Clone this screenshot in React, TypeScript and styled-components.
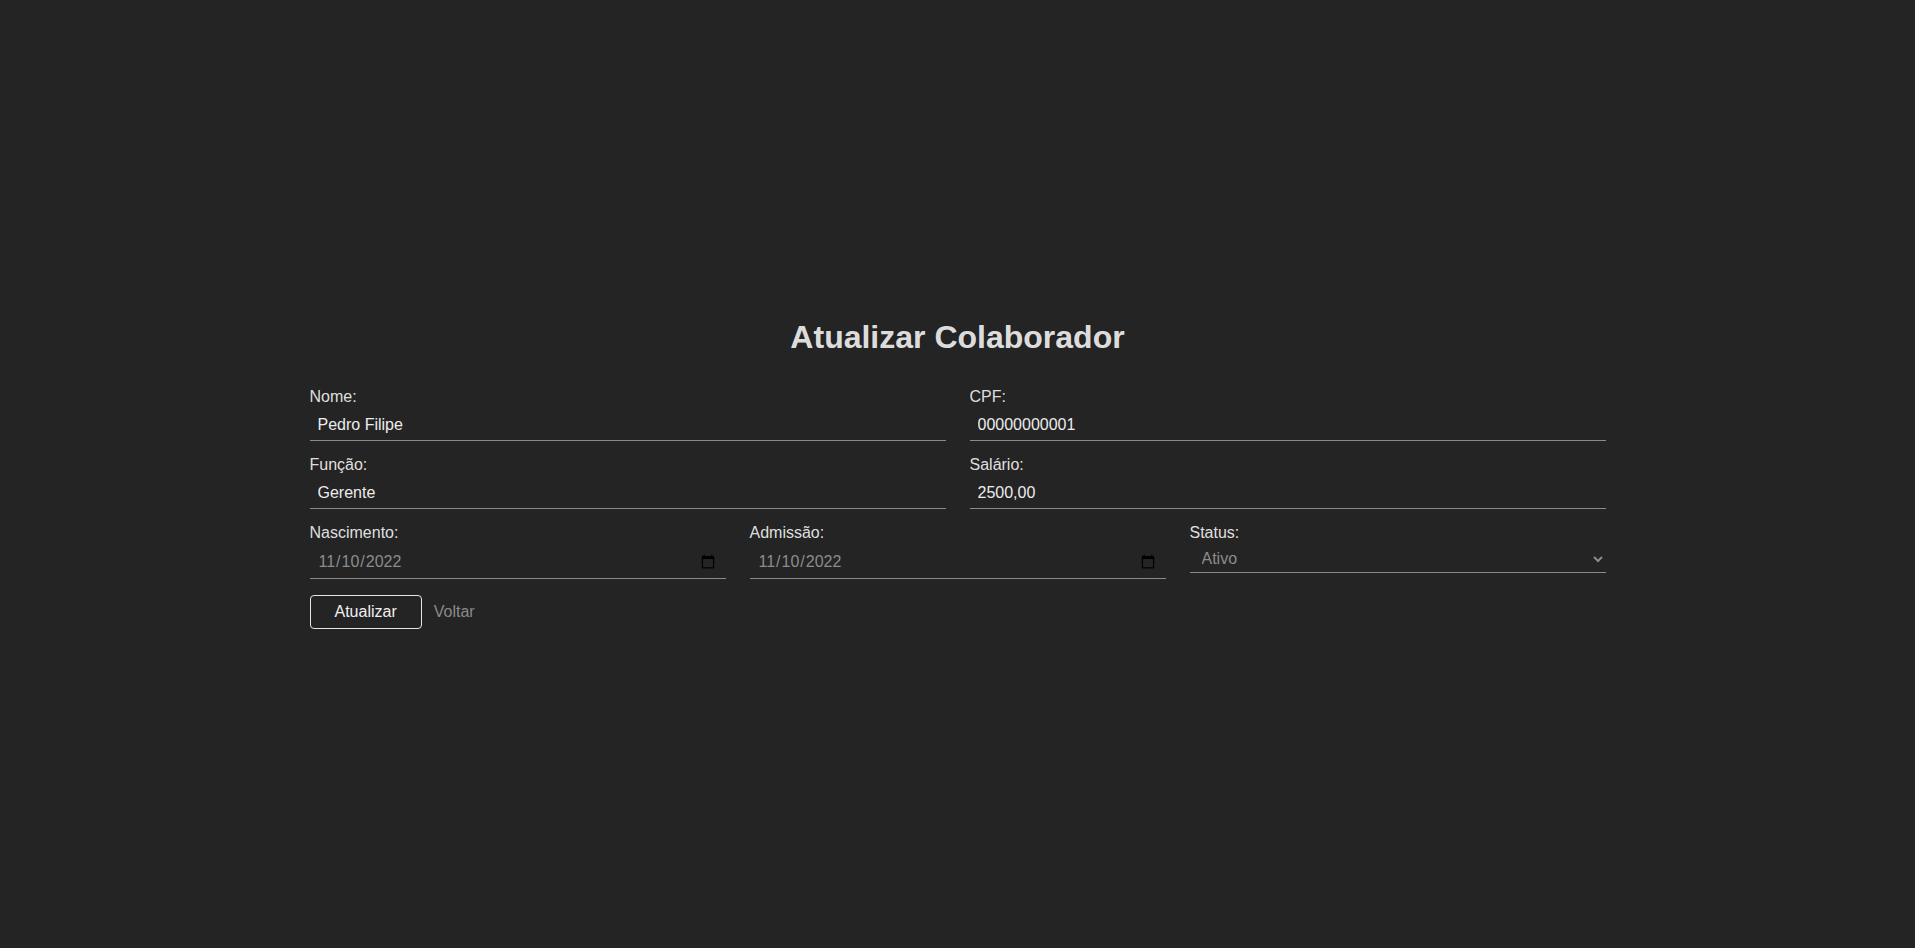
import React from "react";
import styled, { createGlobalStyle } from "styled-components";

const GlobalStyle = createGlobalStyle`
  html, body {
    margin: 0;
    padding: 0;
    background: #242424;
  }
  body {
    font-family: "Liberation Sans", Arial, Helvetica, sans-serif;
    color: rgba(255, 255, 255, 0.87);
  }
`;

const Page = styled.main`
  min-height: 100vh;
  display: flex;
  align-items: center;
  justify-content: center;
`;

const Form = styled.form`
  width: 1296px;
  display: flex;
  flex-direction: column;
`;

const Title = styled.h1`
  margin: 0 0 32px;
  font-size: 32px;
  font-weight: 700;
  text-align: center;
  color: rgba(255, 255, 255, 0.87);
`;

const Fields = styled.div`
  display: flex;
  flex-direction: column;
  gap: 15px;
`;

const Row = styled.div<{ $cols: number }>`
  display: grid;
  grid-template-columns: repeat(${(p) => p.$cols}, 1fr);
  column-gap: 24px;
`;

const Field = styled.div`
  display: flex;
  flex-direction: column;
  align-items: stretch;
`;

const Label = styled.label`
  font-size: 16px;
  line-height: normal;
  margin-bottom: 4px;
  color: rgba(255, 255, 255, 0.87);
`;

const Input = styled.input<{ $muted?: boolean }>`
  font-family: inherit;
  font-size: 16px;
  padding: 6px 8px;
  border: none;
  border-bottom: 1px solid #8a8a8a;
  background: transparent;
  color: ${(p) => (p.$muted ? "#8c8c8c" : "#ececec")};
  outline: none;
  box-sizing: border-box;
  width: 100%;
  margin: 0;
`;

const Select = styled.select`
  font-family: inherit;
  font-size: 16px;
  padding: 3px 4px 4px 8px;
  border: none;
  border-bottom: 1px solid #8a8a8a;
  border-radius: 0;
  background: transparent;
  color: #8c8c8c;
  outline: none;
  width: 100%;
  margin: 0;
`;

const Actions = styled.div`
  display: flex;
  align-items: center;
  gap: 12px;
  margin-top: 16px;
`;

const PrimaryButton = styled.button`
  font-family: inherit;
  font-size: 16px;
  padding: 7px 24px;
  border: 1px solid #e6e6e6;
  border-radius: 4px;
  background: transparent;
  color: #f0f0f0;
  cursor: pointer;
`;

const LinkButton = styled.button`
  font-family: inherit;
  font-size: 16px;
  padding: 0;
  border: none;
  background: transparent;
  color: #8a8a8a;
  cursor: pointer;
`;

export default function App() {
  return (
    <>
      <GlobalStyle />
      <Page>
        <Form onSubmit={(e) => e.preventDefault()}>
          <Title>Atualizar Colaborador</Title>
          <Fields>
            <Row $cols={2}>
              <Field>
                <Label htmlFor="nome">Nome:</Label>
                <Input id="nome" defaultValue="Pedro Filipe" />
              </Field>
              <Field>
                <Label htmlFor="cpf">CPF:</Label>
                <Input id="cpf" defaultValue="00000000001" />
              </Field>
            </Row>
            <Row $cols={2}>
              <Field>
                <Label htmlFor="funcao">Função:</Label>
                <Input id="funcao" defaultValue="Gerente" />
              </Field>
              <Field>
                <Label htmlFor="salario">Salário:</Label>
                <Input id="salario" defaultValue="2500,00" />
              </Field>
            </Row>
            <Row $cols={3}>
              <Field>
                <Label htmlFor="nasc">Nascimento:</Label>
                <Input id="nasc" type="date" $muted defaultValue="2022-11-10" />
              </Field>
              <Field>
                <Label htmlFor="adm">Admissão:</Label>
                <Input id="adm" type="date" $muted defaultValue="2022-11-10" />
              </Field>
              <Field>
                <Label htmlFor="status">Status:</Label>
                <Select id="status" defaultValue="ativo">
                  <option value="ativo">Ativo</option>
                  <option value="inativo">Inativo</option>
                </Select>
              </Field>
            </Row>
          </Fields>
          <Actions>
            <PrimaryButton type="submit">Atualizar</PrimaryButton>
            <LinkButton type="button">Voltar</LinkButton>
          </Actions>
        </Form>
      </Page>
    </>
  );
}
